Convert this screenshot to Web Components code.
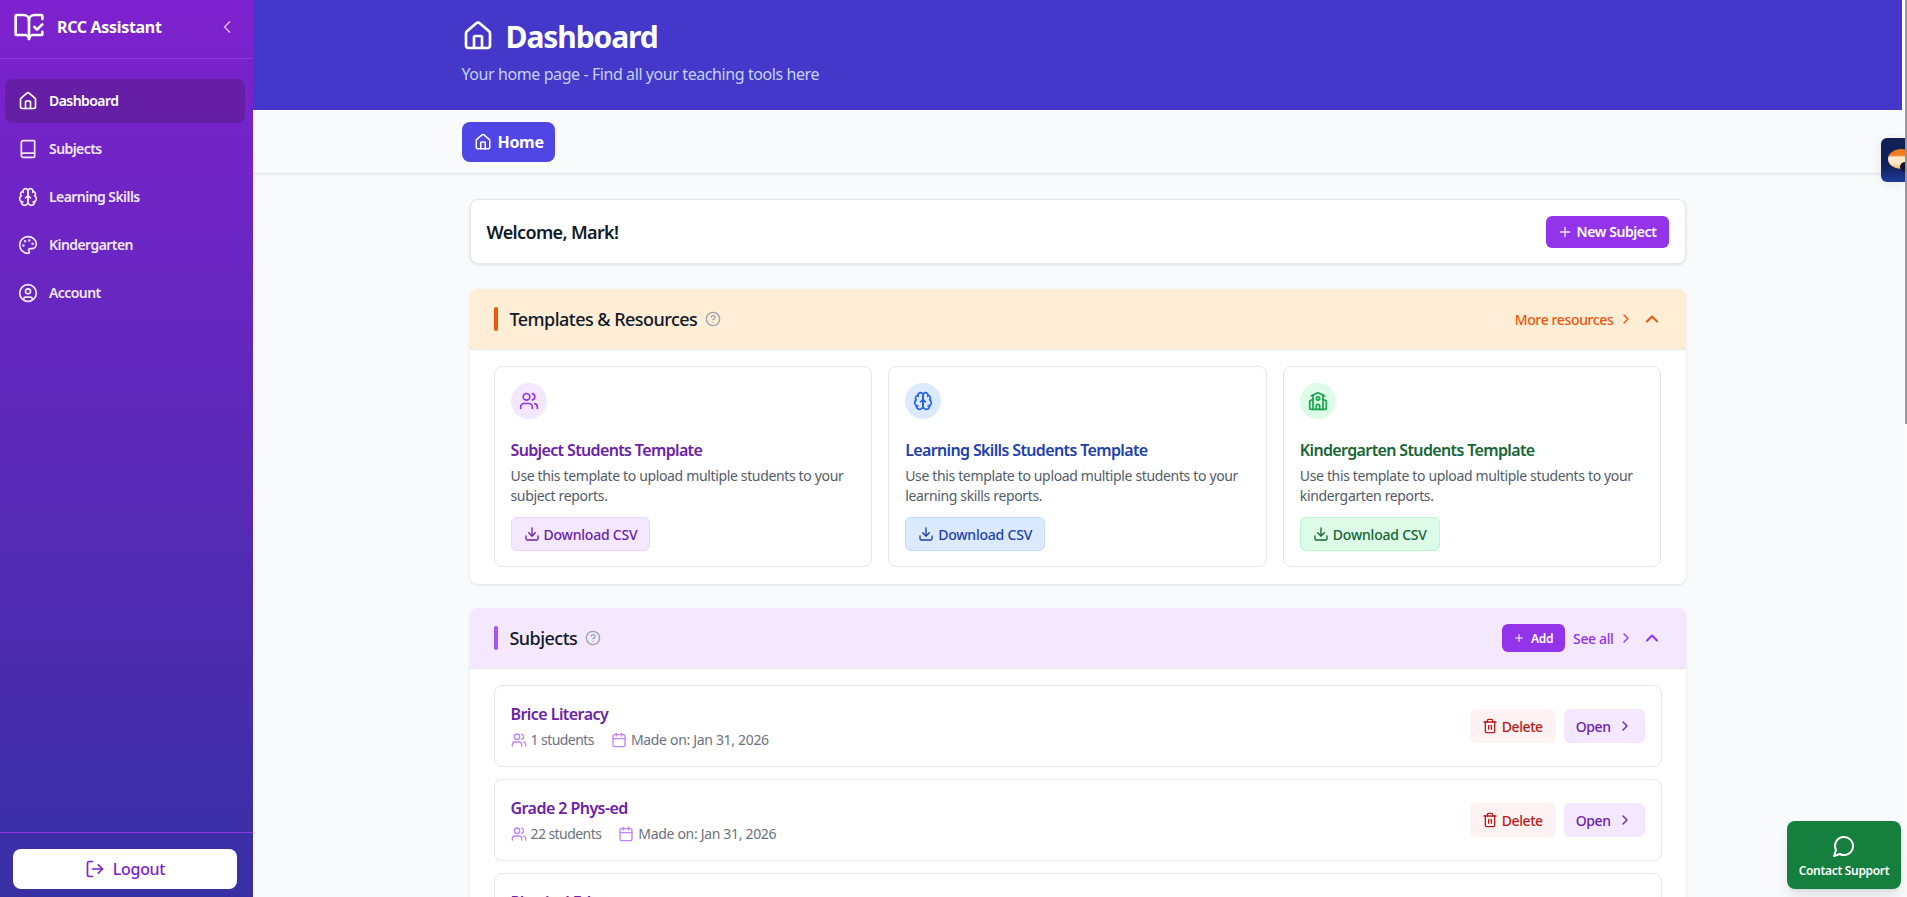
<!DOCTYPE html>
<html>
<head>
<meta charset="utf-8">
<title>RCC Assistant</title>
<style>
  html, body { margin: 0; height: 100%; overflow: hidden; }
  body { font-family: "Noto Sans", "Open Sans", sans-serif; background: #f9fafb; color: #111827; }
  :root { --track: -0.02em; }
</style>
</head>
<body>
<app-shell>
  <app-sidebar slot="side"></app-sidebar>
  <page-header title="Dashboard" subtitle="Your home page - Find all your teaching tools here"></page-header>
  <tab-bar></tab-bar>
  <page-content>
    <welcome-card name="Mark"></welcome-card>
    <section-panel heading="Templates &amp; Resources" tone="orange" link="More resources">
      <div style="display:grid;grid-template-columns:repeat(3,1fr);gap:16px">
        <template-card tone="purple" icon="users" heading="Subject Students Template" text="Use this template to upload multiple students to your subject reports."></template-card>
        <template-card tone="blue" icon="brain" heading="Learning Skills Students Template" text="Use this template to upload multiple students to your learning skills reports."></template-card>
        <template-card tone="green" icon="school" heading="Kindergarten Students Template" text="Use this template to upload multiple students to your kindergarten reports."></template-card>
      </div>
    </section-panel>
    <section-panel heading="Subjects" tone="purple" link="See all" add>
      <div style="display:flex;flex-direction:column;gap:12px">
        <subject-row name="Brice Literacy" students="1"></subject-row>
        <subject-row name="Grade 2 Phys-ed" students="22"></subject-row>
        <subject-row name="Physical Ed"></subject-row>
      </div>
    </section-panel>
  </page-content>
  <side-widget slot="over"></side-widget>
  <support-button slot="over"></support-button>
  <page-scrollbar slot="bar"></page-scrollbar>
</app-shell>

<script>
const ICONS = {
  house: '<path d="M15 21v-8a1 1 0 0 0-1-1h-4a1 1 0 0 0-1 1v8"/><path d="M3 10a2 2 0 0 1 .709-1.528l7-5.999a2 2 0 0 1 2.582 0l7 5.999A2 2 0 0 1 21 10v9a2 2 0 0 1-2 2H5a2 2 0 0 1-2-2z"/>',
  logo: '<path d="M12 21V7"/><path d="m16 12 2 2 4-4"/><path d="M22 6V4a1 1 0 0 0-1-1h-5a4 4 0 0 0-4 4 4 4 0 0 0-4-4H3a1 1 0 0 0-1 1v13a1 1 0 0 0 1 1h6a3 3 0 0 1 3 3 3 3 0 0 1 3-3h6a1 1 0 0 0 1-1v-1.3"/>',
  book: '<path d="M4 19.5v-15A2.5 2.5 0 0 1 6.5 2H19a1 1 0 0 1 1 1v18a1 1 0 0 1-1 1H6.5a1 1 0 0 1 0-5H20"/>',
  brain: '<path d="M12 5a3 3 0 1 0-5.997.125 4 4 0 0 0-2.526 5.77 4 4 0 0 0 .556 6.588A4 4 0 1 0 12 18Z"/><path d="M12 5a3 3 0 1 1 5.997.125 4 4 0 0 1 2.526 5.77 4 4 0 0 1-.556 6.588A4 4 0 1 1 12 18Z"/><path d="M15 13a4.5 4.5 0 0 1-3-4 4.5 4.5 0 0 1-3 4"/><path d="M17.599 6.5a3 3 0 0 0 .399-1.375"/><path d="M6.003 5.125A3 3 0 0 0 6.401 6.5"/><path d="M3.477 10.896a4 4 0 0 1 .585-.396"/><path d="M19.938 10.5a4 4 0 0 1 .585.396"/><path d="M6 18a4 4 0 0 1-1.967-.516"/><path d="M19.967 17.484A4 4 0 0 1 18 18"/>',
  palette: '<circle cx="13.5" cy="6.5" r=".5" fill="currentColor"/><circle cx="17.5" cy="10.5" r=".5" fill="currentColor"/><circle cx="8.5" cy="7.5" r=".5" fill="currentColor"/><circle cx="6.5" cy="12.5" r=".5" fill="currentColor"/><path d="M12 2C6.5 2 2 6.5 2 12s4.5 10 10 10c.926 0 1.648-.746 1.648-1.688 0-.437-.18-.835-.437-1.125-.29-.289-.438-.652-.438-1.125a1.64 1.64 0 0 1 1.668-1.668h1.996c3.051 0 5.555-2.503 5.555-5.554C21.965 6.012 17.461 2 12 2z"/>',
  user: '<circle cx="12" cy="12" r="10"/><circle cx="12" cy="10" r="3"/><path d="M7 20.662V19a2 2 0 0 1 2-2h6a2 2 0 0 1 2 2v1.662"/>',
  logout: '<path d="M9 21H5a2 2 0 0 1-2-2V5a2 2 0 0 1 2-2h4"/><polyline points="16 17 21 12 16 7"/><line x1="21" y1="12" x2="9" y2="12"/>',
  users: '<path d="M16 21v-2a4 4 0 0 0-4-4H6a4 4 0 0 0-4 4v2"/><circle cx="9" cy="7" r="4"/><path d="M22 21v-2a4 4 0 0 0-3-3.87"/><path d="M16 3.13a4 4 0 0 1 0 7.75"/>',
  school: '<path d="M14 22v-4a2 2 0 1 0-4 0v4"/><path d="m18 10 3.447 1.724a1 1 0 0 1 .553.894V20a2 2 0 0 1-2 2H4a2 2 0 0 1-2-2v-7.382a1 1 0 0 1 .553-.894L6 10"/><path d="M18 5v17"/><path d="m4 6 7.106-3.553a2 2 0 0 1 1.788 0L20 6"/><path d="M6 5v17"/><circle cx="12" cy="9" r="2"/>',
  help: '<circle cx="12" cy="12" r="10"/><path d="M9.09 9a3 3 0 0 1 5.83 1c0 2-3 3-3 3"/><path d="M12 17h.01"/>',
  download: '<path d="M21 15v4a2 2 0 0 1-2 2H5a2 2 0 0 1-2-2v-4"/><polyline points="7 10 12 15 17 10"/><line x1="12" y1="15" x2="12" y2="3"/>',
  calendar: '<path d="M8 2v4"/><path d="M16 2v4"/><rect width="18" height="18" x="3" y="4" rx="2"/><path d="M3 10h18"/>',
  trash: '<path d="M3 6h18"/><path d="M19 6v14c0 1-1 2-2 2H7c-1 0-2-1-2-2V6"/><path d="M8 6V4c0-1 1-2 2-2h4c1 0 2 1 2 2v2"/><line x1="10" x2="10" y1="11" y2="17"/><line x1="14" x2="14" y1="11" y2="17"/>',
  message: '<path d="M7.9 20A9 9 0 1 0 4 16.1L2 22Z"/>',
  plus: '<path d="M5 12h14"/><path d="M12 5v14"/>',
  right: '<path d="m9 18 6-6-6-6"/>',
  left: '<path d="m15 18-6-6 6-6"/>',
  up: '<path d="m18 15-6-6-6 6"/>'
}

class LuIcon extends HTMLElement {
  connectedCallback() {
    const size = this.getAttribute("size") || 20
    const width = this.getAttribute("stroke") || 2
    this.attachShadow({ mode: "open" }).innerHTML = `
      <style>:host { display: inline-flex; flex: none; width: ${size}px; height: ${size}px; } svg { display: block; }</style>
      <svg xmlns="http://www.w3.org/2000/svg" width="${size}" height="${size}" viewBox="0 0 24 24" fill="none" stroke="currentColor" stroke-width="${width}" stroke-linecap="round" stroke-linejoin="round">${ICONS[this.getAttribute("name")]}</svg>`
  }
}
customElements.define("lu-icon", LuIcon)

const shellTemplate = document.createElement("template")
shellTemplate.innerHTML = `
  <style>
    :host { display: flex; height: 897px; width: 1907px; overflow: hidden; position: relative; letter-spacing: var(--track); }
    .main { flex: 1; min-width: 0; height: 897px; overflow: hidden; }
  </style>
  <slot name="side"></slot>
  <div class="main"><slot></slot></div>
  <slot name="bar"></slot>
  <slot name="over"></slot>
`
class AppShell extends HTMLElement {
  constructor() {
    super()
    this.attachShadow({ mode: "open" }).appendChild(shellTemplate.content.cloneNode(true))
  }
}
customElements.define("app-shell", AppShell)

class NavItem extends HTMLElement {
  connectedCallback() {
    const active = this.hasAttribute("active")
    this.attachShadow({ mode: "open" }).innerHTML = `
      <style>
        :host { display: flex; align-items: center; gap: 11px; height: 44px; padding: 0 13px; border-radius: 8px;
          font-size: 14px; font-weight: 600; letter-spacing: -0.04em; color: ${active ? "#fff" : "#f3e8ff"}; background: ${active ? "rgba(88,28,135,.55)" : "transparent"}; }
        span { padding-bottom: 2px; }
      </style>
      <lu-icon name="${this.getAttribute("icon")}" size="20"></lu-icon><span><slot></slot></span>`
  }
}
customElements.define("nav-item", NavItem)

const sidebarTemplate = document.createElement("template")
sidebarTemplate.innerHTML = `
  <style>
    :host { display: flex; flex-direction: column; flex: none; width: 253px; height: 897px; color: #fff;
      background: linear-gradient(to bottom, #7e22ce, #3730a3); }
    .top { display: flex; align-items: center; height: 59px; box-sizing: border-box; padding: 0 16px 5px 13px; border-bottom: 1px solid #9333ea; }
    .name { margin-left: 12px; font-size: 16px; font-weight: 700; flex: 1; }
    .collapse { color: #d8b4fe; display: flex; }
    nav { flex: 1; padding: 20px 5px 0 5px; margin-right: 3px; display: flex; flex-direction: column; gap: 4px; }
    .foot { height: 65px; box-sizing: border-box; border-top: 1px solid #9333ea; padding: 16px 16px 0 13px; }
    .logout { display: flex; align-items: center; justify-content: center; gap: 8px; height: 40px; background: #fff; border-radius: 8px;
      color: #7e22ce; font-size: 16px; font-weight: 500; }
  </style>
  <div class="top">
    <lu-icon name="logo" size="32" stroke="2"></lu-icon>
    <span class="name">RCC Assistant</span>
    <span class="collapse"><lu-icon name="left" size="20"></lu-icon></span>
  </div>
  <nav>
    <nav-item icon="house" active>Dashboard</nav-item>
    <nav-item icon="book">Subjects</nav-item>
    <nav-item icon="brain">Learning Skills</nav-item>
    <nav-item icon="palette">Kindergarten</nav-item>
    <nav-item icon="user">Account</nav-item>
  </nav>
  <div class="foot"><div class="logout"><lu-icon name="logout" size="20"></lu-icon><span>Logout</span></div></div>
`
class AppSidebar extends HTMLElement {
  constructor() {
    super()
    this.attachShadow({ mode: "open" }).appendChild(sidebarTemplate.content.cloneNode(true))
  }
}
customElements.define("app-sidebar", AppSidebar)

class PageHeader extends HTMLElement {
  connectedCallback() {
    this.attachShadow({ mode: "open" }).innerHTML = `
      <style>
        :host { display: block; height: 110px; box-sizing: border-box; background: #4338ca; color: #fff; padding: 18px 0 0 208.5px; }
        .row { display: flex; align-items: center; gap: 12px; height: 36px; }
        h1 { margin: 0; padding-top: 2px; font-size: 30px; line-height: 36px; font-weight: 700; letter-spacing: -0.036em; }
        p { margin: 8px 0 0; font-size: 16px; line-height: 24px; color: #c7d2fe; letter-spacing: -0.026em; }
      </style>
      <div class="row"><lu-icon name="house" size="32"></lu-icon><h1>${this.getAttribute("title")}</h1></div>
      <p>${this.getAttribute("subtitle")}</p>`
  }
}
customElements.define("page-header", PageHeader)

const tabTemplate = document.createElement("template")
tabTemplate.innerHTML = `
  <style>
    :host { display: block; height: 64px; box-sizing: border-box; background: #f9fafb; padding: 12px 0 0 208.5px;
      border-bottom: 1px solid #e5e7eb; box-shadow: 0 1px 2px rgba(0,0,0,.05); }
    .tab { display: inline-flex; align-items: center; gap: 6px; height: 40px; padding: 0 11px 0 12px; border-radius: 8px;
      background: #4f46e5; color: #fff; font-size: 16px; font-weight: 700; }
  </style>
  <div class="tab"><lu-icon name="house" size="18"></lu-icon><span>Home</span></div>
`
class TabBar extends HTMLElement {
  constructor() {
    super()
    this.attachShadow({ mode: "open" }).appendChild(tabTemplate.content.cloneNode(true))
  }
}
customElements.define("tab-bar", TabBar)

const contentTemplate = document.createElement("template")
contentTemplate.innerHTML = `
  <style>
    :host { display: flex; flex-direction: column; gap: 24px; width: 1216px; margin: 0 auto; padding-top: 25px; }
  </style>
  <slot></slot>
`
class PageContent extends HTMLElement {
  constructor() {
    super()
    this.attachShadow({ mode: "open" }).appendChild(contentTemplate.content.cloneNode(true))
  }
}
customElements.define("page-content", PageContent)

class WelcomeCard extends HTMLElement {
  connectedCallback() {
    this.attachShadow({ mode: "open" }).innerHTML = `
      <style>
        :host { display: flex; align-items: center; justify-content: space-between; height: 65px; box-sizing: border-box; margin-bottom: 1px;
          padding: 0 16px; background: #fff; border: 1px solid #e5e7eb; border-radius: 8px; box-shadow: 0 1px 3px rgba(0,0,0,.1); }
        .hi { font-size: 18px; font-weight: 600; color: #111827; letter-spacing: -0.035em; }
        .btn { display: flex; align-items: center; gap: 4px; height: 32px; padding: 0 12px 0 11px; border-radius: 6px; background: #9333ea; color: #fff; font-size: 14px; font-weight: 600; letter-spacing: -0.03em; }
        lu-icon { color: #f3e8ff; }
      </style>
      <span class="hi">Welcome, ${this.getAttribute("name")}!</span>
      <span class="btn"><lu-icon name="plus" size="16"></lu-icon><span>New Subject</span></span>`
  }
}
customElements.define("welcome-card", WelcomeCard)

const TONES = {
  orange: { head: "#ffedd5", bar: "#ea580c", link: "#ea580c" },
  purple: { head: "#f3e8ff", bar: "#a855f7", link: "#9333ea" }
}

class SectionPanel extends HTMLElement {
  connectedCallback() {
    const tone = TONES[this.getAttribute("tone")]
    const add = this.hasAttribute("add")
      ? `<span class="add"><lu-icon name="plus" size="12"></lu-icon><span>Add</span></span>` : ""
    this.attachShadow({ mode: "open" }).innerHTML = `
      <style>
        :host { display: block; background: #fff; border-radius: 8px; box-shadow: 0 1px 3px rgba(0,0,0,.1); flex: none; }
        header { display: flex; align-items: center; height: 61px; box-sizing: border-box; padding: 0 24px; background: ${tone.head};
          border-radius: 8px 8px 0 0; border-bottom: 1px solid #e5e7eb; }
        .bar { width: 4px; height: 24px; border-radius: 2px; background: ${tone.bar}; margin-right: 12px; }
        h2 { margin: 0; font-size: 18px; font-weight: 500; color: #111827; letter-spacing: -0.03em; }
        .help { color: #9ca3af; display: flex; margin-left: 8px; }
        .right { margin-left: auto; display: flex; align-items: center; color: ${tone.link}; font-size: 14px; font-weight: 500; letter-spacing: -0.026em; }
        .link { display: flex; align-items: center; gap: 4px; margin-right: 8px; }
        .add { display: flex; align-items: center; gap: 6px; height: 28px; padding: 0 12px 0 11px; border-radius: 6px; background: #9333ea; color: #fff; font-size: 12px; font-weight: 600; margin-right: 8px; }
        .body { padding: 16px 24px 17px; }
      </style>
      <header>
        <span class="bar"></span><h2>${this.getAttribute("heading").replace("&", "&amp;")}</h2>
        <span class="help"><lu-icon name="help" size="16"></lu-icon></span>
        <span class="right">${add}<span class="link"><span>${this.getAttribute("link")}</span><lu-icon name="right" size="16"></lu-icon></span><lu-icon name="up" size="20" stroke="2.5"></lu-icon></span>
      </header>
      <div class="body"><slot></slot></div>`
  }
}
customElements.define("section-panel", SectionPanel)

const CARD_TONES = {
  purple: { soft: "#f3e8ff", line: "#e9d5ff", icon: "#9333ea", dark: "#6b21a8" },
  blue: { soft: "#dbeafe", line: "#bfdbfe", icon: "#2563eb", dark: "#1e40af" },
  green: { soft: "#dcfce7", line: "#bbf7d0", icon: "#16a34a", dark: "#166534" }
}

class TemplateCard extends HTMLElement {
  connectedCallback() {
    const t = CARD_TONES[this.getAttribute("tone")]
    this.attachShadow({ mode: "open" }).innerHTML = `
      <style>
        :host { display: block; height: 201px; box-sizing: border-box; padding: 16px; border: 1px solid #e5e7eb; border-radius: 8px; background: #fff; }
        .dot { width: 36px; height: 36px; border-radius: 50%; background: ${t.soft}; color: ${t.icon}; display: flex; align-items: center; justify-content: center; }
        h3 { margin: 19px 0 4px; font-size: 16px; line-height: 24px; font-weight: 600; color: ${t.dark}; letter-spacing: -0.04em; }
        p { margin: 0 0 11px; font-size: 14px; line-height: 20px; color: #525b6a; letter-spacing: -0.025em; }
        .btn { display: inline-flex; align-items: center; gap: 4px; height: 34px; box-sizing: border-box; padding: 0 12px; border-radius: 6px;
          background: ${t.soft}; border: 1px solid ${t.line}; color: ${t.dark}; font-size: 14px; font-weight: 500; letter-spacing: -0.015em; }
      </style>
      <div class="dot"><lu-icon name="${this.getAttribute("icon")}" size="20"></lu-icon></div>
      <h3>${this.getAttribute("heading")}</h3>
      <p>${this.getAttribute("text")}</p>
      <span class="btn"><lu-icon name="download" size="16"></lu-icon><span>Download CSV</span></span>`
  }
}
customElements.define("template-card", TemplateCard)

class SubjectRow extends HTMLElement {
  connectedCallback() {
    // the third row runs off the bottom of the window, only its title edge shows
    const students = this.getAttribute("students")
    const meta = students ? `
        <div class="meta">
          <span><lu-icon name="users" size="16"></lu-icon><b>${students} students</b></span>
          <span><lu-icon name="calendar" size="16"></lu-icon>Made on: Jan 31, 2026</span>
        </div>` : `<div class="meta" style="height:20px"></div>`
    const acts = students ? `
      <div class="acts">
        <span class="del"><lu-icon name="trash" size="16"></lu-icon>Delete</span>
        <span class="open">Open<lu-icon name="right" size="16"></lu-icon></span>
      </div>` : ""
    this.attachShadow({ mode: "open" }).innerHTML = `
      <style>
        :host { display: flex; align-items: center; justify-content: space-between; height: 82px; box-sizing: border-box; padding: 0 16px; border: 1px solid #e5e7eb; border-radius: 8px; background: #fff; }
        h4 { margin: 0 0 4px; font-size: 16px; line-height: 24px; font-weight: 600; color: #6b21a8; letter-spacing: -0.035em; }
        .meta { display: flex; gap: 17px; font-size: 14px; line-height: 20px; color: #6b7280; }
        .meta span { display: flex; align-items: center; gap: 4px; }
        .meta b { font-weight: 400; letter-spacing: -0.04em; }
        .meta lu-icon { color: #c084fc; }
        .acts { display: flex; gap: 8px; font-size: 14px; font-weight: 500; letter-spacing: -0.03em; }
        .del, .open { display: flex; align-items: center; height: 34px; border-radius: 6px; }
        .del { background: #fef2f2; color: #b91c1c; gap: 4px; padding: 0 13px 0 12px; }
        .open { background: #f3e8ff; color: #6b21a8; gap: 6px; padding: 0 12px; }
      </style>
      <div>
        <h4>${this.getAttribute("name")}</h4>${meta}
      </div>${acts}`
  }
}
customElements.define("subject-row", SubjectRow)

const supportTemplate = document.createElement("template")
supportTemplate.innerHTML = `
  <style>
    :host { position: absolute; left: 1787px; top: 821px; width: 114px; height: 68px; box-sizing: border-box; padding-top: 13px; border-radius: 8px;
      background: #15803d; color: #fff; display: flex; flex-direction: column; align-items: center; gap: 4px;
      box-shadow: 0 10px 15px -3px rgba(0,0,0,.1), 0 4px 6px -4px rgba(0,0,0,.1); font-size: 12px; font-weight: 600; }
  </style>
  <lu-icon name="message" size="24"></lu-icon><span>Contact Support</span>
`
class SupportButton extends HTMLElement {
  constructor() {
    super()
    this.attachShadow({ mode: "open" }).appendChild(supportTemplate.content.cloneNode(true))
  }
}
customElements.define("support-button", SupportButton)

const widgetTemplate = document.createElement("template")
widgetTemplate.innerHTML = `
  <style>
    :host { position: absolute; left: 1881px; top: 138px; width: 24px; height: 44px; overflow: hidden; border-radius: 6px 0 0 6px;
      background: linear-gradient(to bottom, #111f57 0 60%, #1c3a9a 100%);
      box-shadow: 0 2px 12px rgba(0,0,0,.08); }
    .face { position: absolute; left: 7px; top: 11px; width: 26px; height: 20px; border-radius: 50%;
      background: linear-gradient(to bottom, #ee7b1c 0 30%, #fde9c9 42% 70%, #f5b06a 100%); }
    .dot { position: absolute; left: 19px; top: 24px; width: 10px; height: 10px; border-radius: 50%; background: #0e1433; }
  </style>
  <div class="face"></div><div class="dot"></div>
`
class SideWidget extends HTMLElement {
  constructor() {
    super()
    this.attachShadow({ mode: "open" }).appendChild(widgetTemplate.content.cloneNode(true))
  }
}
customElements.define("side-widget", SideWidget)

const barTemplate = document.createElement("template")
barTemplate.innerHTML = `
  <style>
    :host { display: block; flex: none; width: 5px; height: 897px; background: #fbfbfc; position: relative; }
    .thumb { margin-left: 3px; width: 2px; height: 424px; background: #9b9b9f; }
  </style>
  <div class="thumb"></div>
`
class PageScrollbar extends HTMLElement {
  constructor() {
    super()
    this.attachShadow({ mode: "open" }).appendChild(barTemplate.content.cloneNode(true))
  }
}
customElements.define("page-scrollbar", PageScrollbar)
</script>
</body>
</html>
